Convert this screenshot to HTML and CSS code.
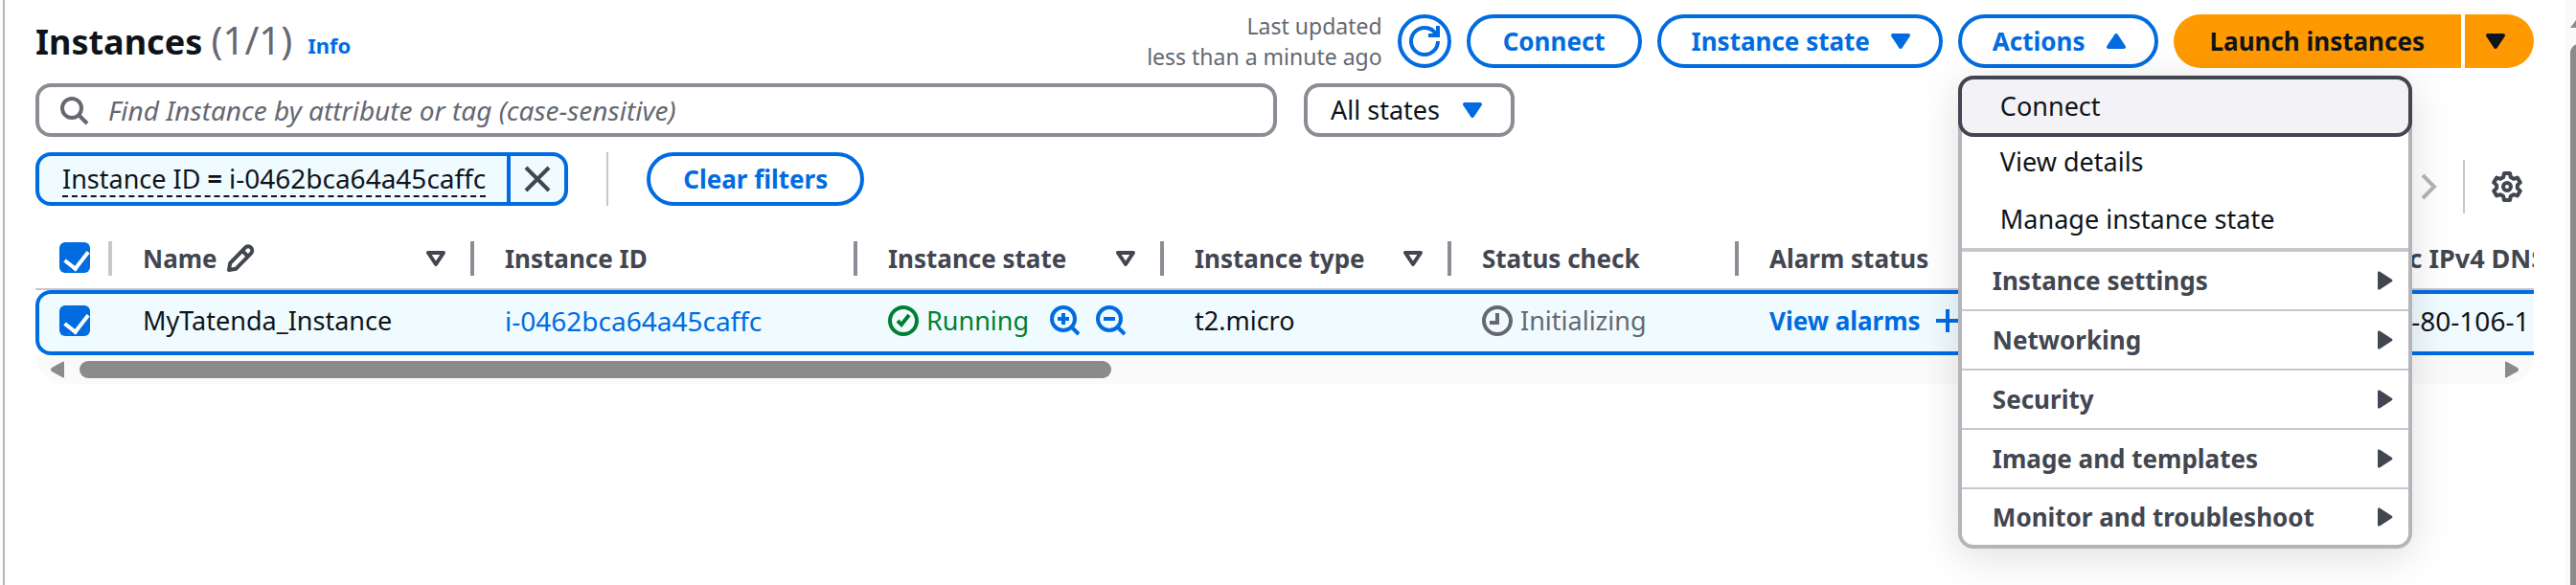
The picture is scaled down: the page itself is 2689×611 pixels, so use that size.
FILE: index.html
```html
<!DOCTYPE html>
<html lang="en">
<head>
<meta charset="utf-8">
<title>Instances</title>
<link rel="stylesheet" href="styles.css">
</head>
<body>
<div class="app">
  <main class="panel">
    <header class="header">
      <h1 class="title">Instances <span class="count">(1/1)</span></h1>
      <a class="info" href="#info">Info</a>
      <div class="actions">
        <p class="updated">Last updated<br>less than a minute ago</p>
        <button class="btn btn-round" type="button" aria-label="Refresh">
          <svg class="icon" viewBox="0 0 16 16" fill="none" stroke="currentColor" stroke-width="2"><path d="M15 8c0 3.870-3.130 7-7 7s-7-3.130-7-7 3.130-7 7-7c2.790 0 5.200 1.630 6.330 4"/><path d="M10 5h5V0"/></svg>
        </button>
        <button class="btn" type="button">Connect</button>
        <button class="btn btn-menu" type="button">Instance state
          <svg class="icon" viewBox="0 0 16 16" fill="currentColor" stroke="currentColor" stroke-width="2" stroke-linejoin="round"><path d="M4 5h8l-4 6z"/></svg>
        </button>
        <div class="dropdown">
          <button class="btn btn-menu" type="button" aria-haspopup="menu" aria-expanded="true">Actions
            <svg class="icon" viewBox="0 0 16 16" fill="currentColor" stroke="currentColor" stroke-width="2" stroke-linejoin="round"><path d="M4 11h8l-4-6z"/></svg>
          </button>
          <div class="menu" role="menu">
            <button class="item item-active" type="button" role="menuitem">Connect</button>
            <button class="item" type="button" role="menuitem">View details</button>
            <button class="item" type="button" role="menuitem">Manage instance state</button>
            <div class="groups">
              <button class="group" type="button" role="menuitem">Instance settings <svg class="caret" viewBox="0 0 16 20"><path d="M0 1.500Q0 0 2 .6L15 9q1 1 0 2L2 19.400Q0 20 0 18.500z"/></svg></button>
              <button class="group" type="button" role="menuitem">Networking <svg class="caret" viewBox="0 0 16 20"><path d="M0 1.500Q0 0 2 .6L15 9q1 1 0 2L2 19.400Q0 20 0 18.500z"/></svg></button>
              <button class="group" type="button" role="menuitem">Security <svg class="caret" viewBox="0 0 16 20"><path d="M0 1.500Q0 0 2 .6L15 9q1 1 0 2L2 19.400Q0 20 0 18.500z"/></svg></button>
              <button class="group" type="button" role="menuitem">Image and templates <svg class="caret" viewBox="0 0 16 20"><path d="M0 1.500Q0 0 2 .6L15 9q1 1 0 2L2 19.400Q0 20 0 18.500z"/></svg></button>
              <button class="group" type="button" role="menuitem">Monitor and troubleshoot <svg class="caret" viewBox="0 0 16 20"><path d="M0 1.500Q0 0 2 .6L15 9q1 1 0 2L2 19.400Q0 20 0 18.500z"/></svg></button>
            </div>
          </div>
        </div>
        <div class="split">
          <button class="primary primary-main" type="button">Launch instances</button>
          <button class="primary primary-more" type="button" aria-label="More launch options">
            <svg class="icon" viewBox="0 0 16 16" fill="currentColor" stroke="currentColor" stroke-width="2" stroke-linejoin="round"><path d="M4 5h8l-4 6z"/></svg>
          </button>
        </div>
      </div>
    </header>

    <div class="filters">
      <label class="search">
        <svg class="icon" viewBox="0 0 16 16" fill="none" stroke="currentColor" stroke-width="2"><circle cx="7" cy="7" r="5"/><path d="m15 15-4.500-4.500"/></svg>
        <input type="text" aria-label="Find Instance" placeholder="Find Instance by attribute or tag (case-sensitive)">
      </label>
      <div class="select">
        <select aria-label="Instance state filter"><option>All states</option></select>
        <svg class="icon" viewBox="0 0 16 16" fill="currentColor" stroke="currentColor" stroke-width="2" stroke-linejoin="round"><path d="M4 5h8l-4 6z"/></svg>
      </div>
    </div>

    <div class="tokens">
      <div class="token">
        <button class="token-text" type="button"><span class="token-label">Instance ID <b>=</b> <span class="ident">i-0462bca64a45caffc</span></span></button>
        <button class="token-close" type="button" aria-label="Remove filter">
          <svg class="icon" viewBox="0 0 16 16" fill="none" stroke="currentColor" stroke-width="2"><path d="m2 2 12 12M14 2 2 14"/></svg>
        </button>
      </div>
      <span class="rule"></span>
      <button class="btn" type="button">Clear filters</button>
      <div class="pager">
        <button class="next" type="button" aria-label="Next page"><svg class="icon" viewBox="0 0 16 16" fill="none" stroke="currentColor" stroke-width="2"><path d="m5 2 6 6-6 6"/></svg></button>
        <span class="rule"></span>
        <button type="button" aria-label="Preferences"><svg class="icon" viewBox="0 0 16 16" fill="none" stroke="currentColor" stroke-width="2" stroke-linejoin="round"><path d="M6.500 1h3l.4 2 1.500.9 2-.6 1.500 2.500-1.500 1.400v1.600l1.500 1.400-1.500 2.500-2-.6-1.500.9-.4 2h-3l-.4-2-1.500-.9-2 .6-1.500-2.500 1.500-1.400V7.200L1.100 5.800l1.500-2.500 2 .6L6.100 3z"/><circle cx="8" cy="8" r="2"/></svg></button>
      </div>
    </div>

    <div class="table-wrap">
      <table class="table">
        <colgroup><col class="c-check"><col class="c-name"><col class="c-id"><col class="c-state"><col class="c-std"><col class="c-std"><col class="c-std"><col class="c-std"><col></colgroup>
        <thead>
          <tr>
            <th class="check"><input type="checkbox" checked aria-label="Select all instances"></th>
            <th><div class="head"><span class="label">Name <svg class="pencil" viewBox="0 0 16 16" fill="none" stroke="currentColor" stroke-width="2" stroke-linejoin="round"><path d="M2 14l.6-3.600 7.900-8.100a2.100 2.100 0 0 1 3 3L5.600 13.400z"/><path d="m9 4 3 3"/></svg></span><svg class="sort" viewBox="0 0 20 16"><path d="M2 2h16l-8 12z"/></svg></div></th>
            <th><div class="head">Instance ID</div></th>
            <th><div class="head">Instance state<svg class="sort" viewBox="0 0 20 16"><path d="M2 2h16l-8 12z"/></svg></div></th>
            <th><div class="head">Instance type<svg class="sort" viewBox="0 0 20 16"><path d="M2 2h16l-8 12z"/></svg></div></th>
            <th><div class="head">Status check</div></th>
            <th><div class="head">Alarm status</div></th>
            <th><div class="head"></div></th>
            <th><div class="head">Public IPv4 DNS</div></th>
          </tr>
        </thead>
        <tbody>
          <tr>
            <td class="check"><input type="checkbox" checked aria-label="Select MyTatenda_Instance"></td>
            <td>MyTatenda_Instance</td>
            <td><a class="ident" href="#instance">i-0462bca64a45caffc</a></td>
            <td><div class="cell running">
              <svg class="icon" viewBox="0 0 16 16" fill="none" stroke="currentColor" stroke-width="2"><circle cx="8" cy="8" r="7"/><path d="m5 8 2 2 4-5"/></svg>Running
              <button class="zoom zoom-first" type="button" aria-label="Filter in"><svg class="icon" viewBox="0 0 16 16" fill="none" stroke="currentColor" stroke-width="2"><circle cx="7" cy="7" r="6"/><path d="m15 15-3.500-3.500M4 7h6M7 4v6"/></svg></button>
              <button class="zoom" type="button" aria-label="Filter out"><svg class="icon" viewBox="0 0 16 16" fill="none" stroke="currentColor" stroke-width="2"><circle cx="7" cy="7" r="6"/><path d="m15 15-3.500-3.500M4 7h6"/></svg></button>
            </div></td>
            <td>t2.micro</td>
            <td><div class="cell pending"><svg class="icon" viewBox="0 0 16 16" fill="none" stroke="currentColor" stroke-width="2"><circle cx="8" cy="8" r="7"/><path d="M8 4v5H4"/></svg>Initializing</div></td>
            <td><div class="cell alarms"><a href="#alarms">View alarms</a><svg class="plus" viewBox="0 0 24 24" stroke="currentColor" stroke-width="4"><path d="M12 0v24M0 12h24"/></svg></div></td>
            <td></td>
            <td><span class="ident">ec2-3-80-106-1</span></td>
          </tr>
        </tbody>
      </table>
    </div>
    <div class="hscroll">
      <svg class="harrow" viewBox="0 0 14 18"><path d="M14 1v16q0 1-2 0L1 11q-2-2 0-4L12 1q2-1 2 0z"/></svg>
      <div class="htrack"><div class="hthumb"></div></div>
      <svg class="harrow" viewBox="0 0 14 18"><path d="M0 1v16q0 1 2 0l11-6q2-2 0-4L2 1Q0 0 0 1z"/></svg>
    </div>
  </main>
  <div class="vscroll"><span class="varrow"></span><span class="vthumb"></span></div>
</div>
</body>
</html>
```
FILE: styles.css
```css
:root {
  --blue: #006ce0;
  --ink: #0f141a;
  --slate: #424650;
  --muted: #656871;
  --line: #c6c6cd;
  --border: #8c8c94;
  --select: #f0fbff;
}
* { box-sizing: border-box; }
body {
  margin: 0;
  overflow: hidden;
  background: #fff;
  color: var(--ink);
  font: 27px/40px "Noto Sans", "Open Sans", sans-serif;
}
button, input, select { font: inherit; color: inherit; margin: 0; }
button { padding: 0; border: 0; background: none; white-space: nowrap; }
a { color: var(--blue); text-decoration: none; }
svg { display: block; flex: none; }
.icon { width: 32px; height: 32px; }
.ident { font-size: 28px; }
.app { display: flex; min-height: 100vh; padding-left: 3px; }
.panel {
  flex: 1;
  min-width: 0;
  border-left: 2px solid #b4b4bb;
  padding: 11px 32px 0 32px;
}
.header { display: flex; align-items: center; }
.title { margin: 0; font-size: 36px; line-height: 48px; font-weight: 700; }
.count { font-size: 40px; font-weight: 400; color: var(--muted); }
.info { margin-left: 16px; padding-top: 8px; font-size: 22px; font-weight: 700; }
.actions { display: flex; align-items: center; gap: 16px; margin-left: auto; }
.updated { margin: 0; font-size: 23px; line-height: 32px; color: var(--muted); text-align: right; }
.btn {
  display: flex;
  align-items: center;
  gap: 16px;
  height: 56px;
  padding: 0 34px;
  border: 4px solid var(--blue);
  border-radius: 40px;
  background: #fff;
  color: var(--blue);
  font-size: 26px;
  font-weight: 700;
}
.btn-menu { padding: 0 24px 0 32px; }
.btn-round { width: 56px; padding: 0; justify-content: center; }
.split { display: flex; gap: 4px; }
.primary { height: 56px; background: #ff9900; font-size: 26px; font-weight: 700; }
.primary-main { padding: 0 38px; border-radius: 40px 0 0 40px; }
.primary-more { padding: 0 24px 0 16px; border-radius: 0 40px 40px 0; }

.dropdown { position: relative; }
.menu {
  position: absolute;
  z-index: 2;
  top: 64px;
  left: 0;
  width: 474px;
  display: flex;
  flex-direction: column;
  border: 4px solid #b4b4bb;
  border-top: 0;
  border-radius: 16px;
  background: #fff;
  box-shadow: 0 8px 40px 2px rgba(0, 7, 22, 0.12);
}
.item { height: 60px; padding: 0 40px; text-align: left; }
.item-active {
  height: 64px;
  margin: 0 -4px -4px;
  border: 4px solid var(--slate);
  border-radius: 16px;
  background: #f3f3f7;
}
.groups { border-top: 4px solid var(--line); }
.group {
  display: flex;
  align-items: center;
  justify-content: space-between;
  width: 100%;
  height: 62px;
  padding: 0 16px 0 32px;
  border-bottom: 2px solid var(--line);
  color: var(--slate);
  font-size: 26px;
  font-weight: 700;
}
.group:last-child { border-bottom: 0; height: 58px; }
.caret { width: 16px; height: 20px; fill: currentColor; }

.filters { display: flex; gap: 28px; margin-top: 12px; }
.search, .select {
  display: flex;
  align-items: center;
  height: 56px;
  border: 4px solid var(--border);
  border-radius: 16px;
  background: #fff;
}
.search { width: 1296px; padding-left: 20px; gap: 20px; color: var(--muted); }
.search input { flex: 1; border: 0; outline: 0; padding: 0; background: none; font-size: 28px; }
.search input::placeholder { color: var(--muted); font-style: italic; opacity: 1; }
.select { position: relative; width: 220px; }
.select select {
  appearance: none;
  width: 100%;
  border: 0;
  outline: 0;
  padding: 0 24px;
  background: none;
}
.select .icon { position: absolute; right: 24px; color: var(--blue); pointer-events: none; }

.tokens { display: flex; align-items: flex-start; margin-top: 16px; }
.token {
  display: flex;
  height: 56px;
  border: 4px solid var(--blue);
  border-radius: 16px;
  background: var(--select);
}
.token-text { padding: 0 22px 0 24px; }
.token-label { display: block; line-height: 34px; border-bottom: 2px dashed var(--ink); }
.token-close { padding: 0 12px; border-left: 4px solid var(--blue); color: var(--slate); }
.rule { width: 2px; height: 56px; margin: 0 40px; background: var(--line); }
.pager { display: flex; align-items: center; margin: 8px 12px 0 auto; color: var(--slate); }
.pager .rule { margin: 0 28px 0 20px; }
.next { color: #b4b4bb; }

.table-wrap { margin-top: 16px; overflow: hidden; }
.table { width: 100%; border-collapse: separate; border-spacing: 0; table-layout: fixed; }
.c-check { width: 76px; }
.c-name { width: 382px; }
.c-id { width: 400px; }
.c-state { width: 320px; }
.c-std { width: 300px; }
th, td { padding: 0; text-align: left; white-space: nowrap; }
th { height: 64px; border-bottom: 2px solid var(--line); color: var(--slate); font-size: 26px; }
.head {
  display: flex;
  align-items: center;
  justify-content: space-between;
  height: 36px;
  padding: 0 26px 0 32px;
  border-right: 4px solid var(--border);
}
th:last-child { font-size: 27px; }
th:last-child .head { border-right: 0; padding-right: 0; }
th:nth-child(2) .head { border-left: 4px solid var(--line); }
.label { display: flex; align-items: center; gap: 8px; }
.pencil { width: 32px; height: 32px; }
.sort { width: 20px; height: 16px; fill: none; stroke: currentColor; stroke-width: 4; stroke-linejoin: round; }
td {
  height: 68px;
  padding: 0 0 4px 32px;
  border-top: 4px solid var(--blue);
  border-bottom: 4px solid var(--blue);
  background: var(--select);
}
td:nth-child(2) { padding-left: 36px; }
th.check { padding: 0 0 2px 25px; }
td.check { padding-left: 21px; border-left: 4px solid var(--blue); border-radius: 16px 0 0 16px; }
input[type="checkbox"] {
  appearance: none;
  display: block;
  width: 32px;
  height: 32px;
  border-radius: 6px;
  background: var(--blue);
  position: relative;
}
input[type="checkbox"]::after {
  content: "";
  position: absolute;
  left: 10px;
  top: 4px;
  width: 12px;
  height: 20px;
  border: solid #fff;
  border-width: 0 4px 4px 0;
  rotate: 38deg;
}
.cell { display: flex; align-items: center; gap: 8px; }
.running { color: #00802f; }
.pending { color: var(--muted); }
.alarms { color: var(--blue); font-size: 26px; font-weight: 700; gap: 16px; }
.plus { width: 24px; height: 24px; }
.zoom { color: var(--blue); margin-left: 8px; }
.zoom-first { margin-left: 14px; }

.hscroll {
  display: flex;
  align-items: center;
  height: 30px;
  padding: 0 16px;
  gap: 16px;
  background: #fafafa;
  border-radius: 0 0 30px 30px;
}
.harrow { width: 14px; height: 18px; fill: #8b8b8b; }
.htrack { flex: 1; }
.hthumb { width: 42.8%; height: 18px; border-radius: 9px; background: #8b8b8b; }

.vscroll { width: 12px; padding-left: 6px; background: #fafafa; overflow: hidden; display: flex; flex-direction: column; }
.varrow { width: 18px; height: 12px; margin: 17px 0; background: #8b8b8b; clip-path: polygon(50% 0, 100% 100%, 0 100%); }
.vthumb { flex: 1; width: 18px; border-radius: 9px 9px 0 0; background: #8b8b8b; }
```
